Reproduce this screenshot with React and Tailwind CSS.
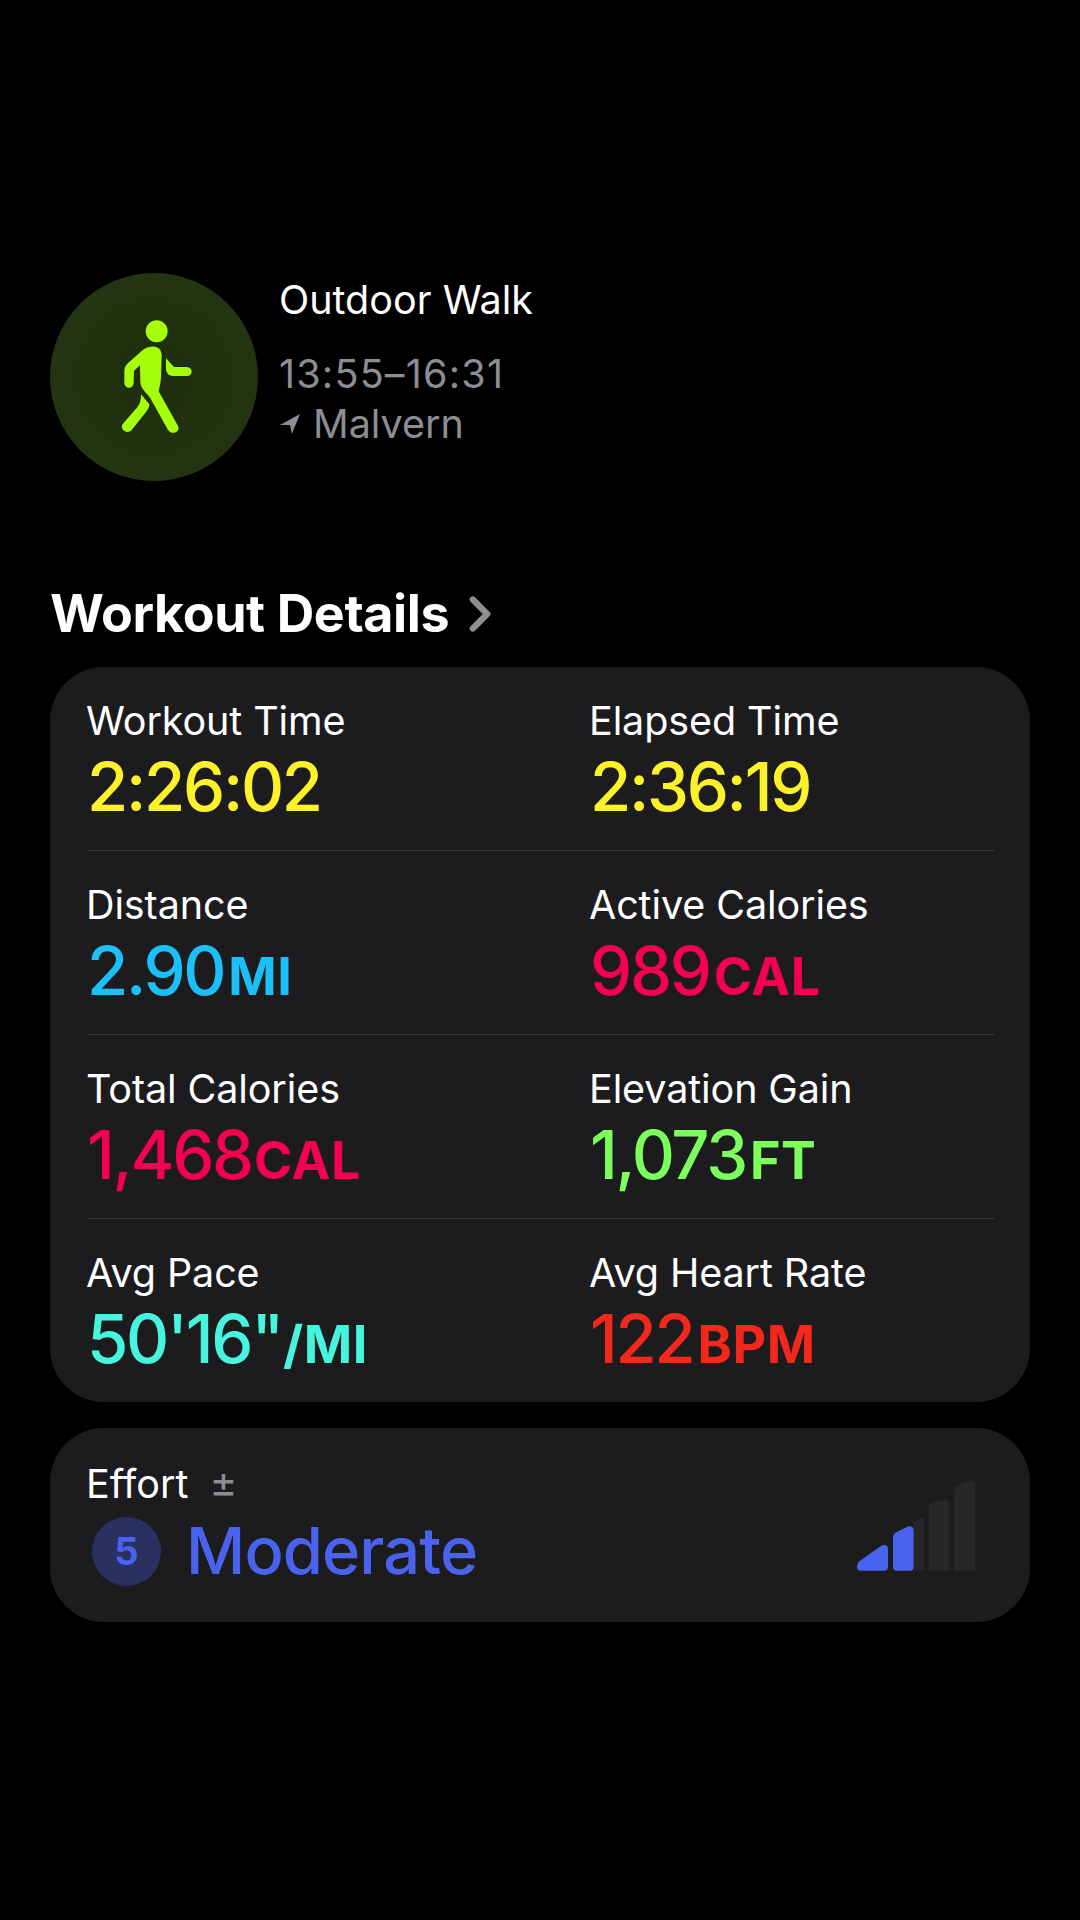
const font = { fontFamily: "Inter, 'Noto Sans', sans-serif" };

function Metric({ label, value, unit, color, gap }) {
  return (
    <div className="flex h-[183px] flex-col pt-[30px]">
      <div className="-ml-[1px] h-[48px] text-[39.5px] leading-[48px] font-normal text-white tracking-[-0.1px]">{label}</div>
      <div className={`mt-[2px] flex h-[80px] items-baseline leading-[80px] ${color}`}>
        <span className="text-[67px] font-[550] tracking-[-2.3px]">{value}</span>
        {unit && <span className={`${gap || "ml-[4px]"} text-[52px] font-bold tracking-[0.6px]`}>{unit}</span>}
      </div>
    </div>
  );
}

const rows = [
  [
    { label: "Workout Time", value: "2:26:02", color: "text-[#fdf22a]" },
    { label: "Elapsed Time", value: "2:36:19", color: "text-[#fdf22a]" },
  ],
  [
    { label: "Distance", value: "2.90", unit: "MI", color: "text-[#1cc0f8]" },
    { label: "Active Calories", value: "989", unit: "CAL", color: "text-[#f5004f]" },
  ],
  [
    { label: "Total Calories", value: "1,468", unit: "CAL", color: "text-[#f5004f]", gap: "ml-[2px]" },
    { label: "Elevation Gain", value: "1,073", unit: "FT", color: "text-[#7cff5c]" },
  ],
  [
    { label: "Avg Pace", value: "50'16\"", unit: "/MI", color: "text-[#47f5df]", gap: "ml-[1px]" },
    { label: "Avg Heart Rate", value: "122", unit: "BPM", color: "text-[#f1281b]" },
  ],
];

function Walker() {
  return (
    <svg viewBox="-30 -51 624 624" className="h-full w-full" fill="#a6ff0a">
      <circle cx="290" cy="124" r="33" />
      <path d="M272 170 C292 166 306 178 305 198 L303 262 C302 280 298 292 296 304 L354 408 C362 424 338 438 324 420 L272 326 C258 306 243 298 241 276 L240 226 L222 242 L221 278 C220 298 194 298 193 278 L193 244 C193 232 198 224 205 218 L246 182 C254 175 262 171 272 170 Z" />
      <path d="M243 313 L268 343 C268 352 264 358 258 366 L215 420 C200 436 176 416 190 400 L232 352 C240 342 243 330 243 313 Z" />
      <path d="M318 205 L342 231 L380 231 C400 232 400 258 380 258 L338 258 C326 257 318 248 318 236 Z" />
    </svg>
  );
}

function Bars() {
  return (
    <svg viewBox="170 180 354 272" className="h-[91px] w-[118px]">
      <path d="M340 452 L340 310 Q352 293 372 293 L372 452 Z" fill="#272729" />
      <path d="M385 452 L385 262 Q385 250 397 246 L435 238 Q447 238 447 250 L447 452 Z" fill="#272729" />
      <path d="M462 452 L462 212 Q462 200 474 194 L510 180 Q524 180 524 194 L524 452 Z" fill="#272729" />
      <path d="M278 440 L278 352 Q278 342 288 336 L322 319 Q340 316 340 332 L340 440 Q340 452 328 452 L290 452 Q278 452 278 440 Z" fill="#4a63ef" />
      <path d="M178 452 L250 452 Q263 452 263 440 L263 388 Q263 370 244 376 L176 424 Q162 444 178 452 Z" fill="#4a63ef" />
    </svg>
  );
}

export default function App() {
  return (
    <div style={font} className="min-h-[1920px] w-[1080px] bg-black px-[50px] pt-[273px]">
      <div className="flex h-[208px]">
        <div className="h-[208px] w-[208px] shrink-0 rounded-full bg-[radial-gradient(circle,#1e2e0e_0%,#223310_60%,#27391a_100%)]">
          <Walker />
        </div>
        <div className="ml-[21px] flex flex-col pt-[2px]">
          <div className="h-[50px] text-[39.5px] leading-[50px] text-white">Outdoor Walk</div>
          <div className="mt-[24px] h-[50px] text-[39.5px] leading-[50px] tracking-[1.2px] text-[#8d8d93]">13:55–16:31</div>
          <div className="flex h-[50px] items-center text-[39.5px] leading-[50px] text-[#8d8d93]">
            <svg viewBox="0 0 24 24" className="mr-[12px] h-[22px] w-[22px]" fill="#8d8d93">
              <path d="M23 1 L1 13 L12 13 L14 23 Z" />
            </svg>
            Malvern
          </div>
        </div>
      </div>

      <div className="mt-[103px] flex h-[60px] items-center">
        <span className="text-[52px] leading-[60px] font-bold tracking-[-0.4px] text-white">Workout Details</span>
        <svg viewBox="0 0 24 40" className="ml-[19px] h-[36px] w-[24px]" fill="none" stroke="#8e8e93" strokeWidth="7" strokeLinecap="round" strokeLinejoin="round">
          <path d="M4 4 L20 20 L4 36" />
        </svg>
      </div>

      <div className="mt-[23px] h-[735px] rounded-[54px] bg-[#1c1c1e] pl-[37px] pr-[36px]">
        {rows.map((row, i) => (
          <div key={i} className={`grid grid-cols-[503px_1fr] ${i < 3 ? "border-b border-[#38383a]" : ""}`}>
            {row.map((m) => (
              <Metric key={m.label} {...m} />
            ))}
          </div>
        ))}
      </div>

      <div className="mt-[26px] flex h-[194px] items-end justify-between rounded-[54px] bg-[#1c1c1e] pl-[37px] pr-[55px]">
        <div className="flex h-full flex-col pt-[32px]">
          <div className="-ml-[1px] flex h-[48px] items-center">
            <span className="text-[39.5px] leading-[48px] text-white">Effort</span>
            <span className="ml-[21px] mb-[4px] text-[42px] leading-[48px] text-[#8d8d93]">±</span>
          </div>
          <div className="mt-[3px] flex items-center pl-[5px]">
            <div className="flex h-[69px] w-[69px] items-center justify-center rounded-full bg-[#2a3060] text-[38px] font-bold text-[#4a63ef]">5</div>
            <span className="ml-[25px] text-[65px] leading-[80px] font-[550] tracking-[-0.9px] text-[#4a63ef]">Moderate</span>
          </div>
        </div>
        <div className="mb-[51px]">
          <Bars />
        </div>
      </div>
    </div>
  );
}
